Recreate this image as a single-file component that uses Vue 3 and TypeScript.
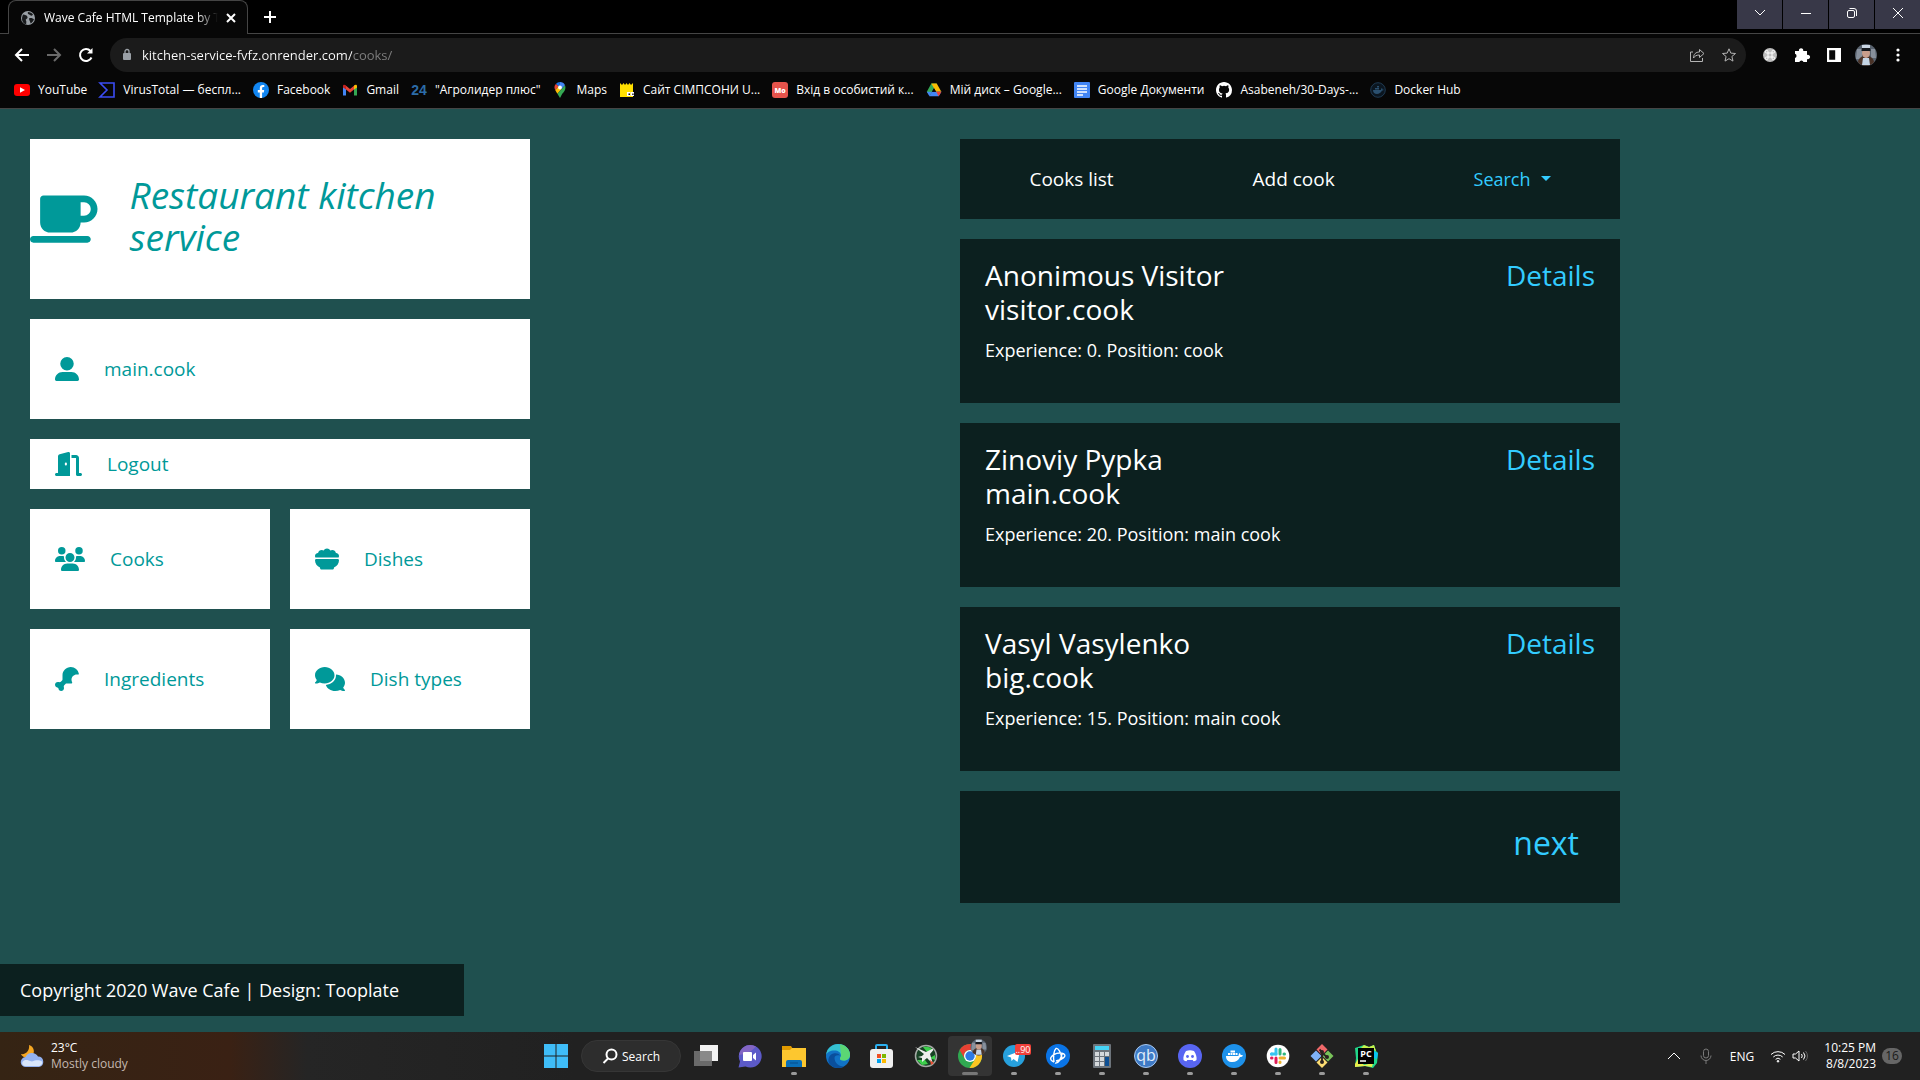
<script setup lang="ts">
interface Bookmark { label: string; icon: string }
interface MenuItem { label: string; width: number; path: string; wide?: boolean; short?: boolean }
interface Cook { name: string; username: string; experience: number; position: string }
interface TaskApp { name: string; icon: string; running?: boolean; active?: boolean }

const glyphs: Record<string, string> = {
  youtube: '<rect y="2" width="16" height="12" rx="3" fill="#f00"/><path d="M6 5.3v5.4L11 8z" fill="#fff"/>',
  virustotal: '<path d="M1 1h14v14H1l7-7z" fill="none" stroke="#3b4df5" stroke-width="1.6"/>',
  facebook: '<circle cx="8" cy="8" r="8" fill="#1186f2"/><path d="M6.8 16v-5.6H4.8V8h2V6.3c0-2.1 1.2-3.2 3-3.2.7 0 1.5.1 1.5.1v1.9h-1c-.9 0-1.2.6-1.2 1.2V8h2.1l-.4 2.4H9.1V16z" fill="#fff"/>',
  gmail: '<path d="M1 4v9.5h3V7z" fill="#4285f4"/><path d="M12 7v6.5h3V4z" fill="#34a853"/><path d="M4 3.8 8 7l4-3.2v3.8L8 10.8 4 7.6z" fill="#ea4335"/><path d="M1 4.2C1 2.5 2.8 2.4 4 3.5v4.1L1 5.4z" fill="#c5221f"/><path d="M15 4.2c0-1.700-1.800-1.800-3-.7v4.100l3-2.200z" fill="#fbbc04"/>',
  agro: '<text x="8" y="13" text-anchor="middle" font-family="Liberation Sans, sans-serif" font-weight="700" font-size="14" fill="#2c6ca8">24</text>',
  maps: '<path d="M8 0a5.5 5.5 0 0 0-4.2 2l3 2.6z" fill="#1a73e8"/><path d="M3.8 2A5.4 5.4 0 0 0 3.3 8.2l3.4-4z" fill="#ea4335"/><path d="M8 0a5.5 5.5 0 0 1 5 3.2L9.7 7 6.8 4.2z" fill="#4285f4"/><path d="m3.3 8.2 3.2-4 3 3-4.100 4.600z" fill="#fbbc04"/><path d="M13 3.200c1.500 4.100-1.200 6.600-3 9L8 16l-2.600-4.200z" fill="#34a853"/><circle cx="8" cy="5.500" r="1.900" fill="#fff"/>',
  bart: '<path d="M1 1l2 2 1.500-2L6 3l1.500-2L9 3l1.500-2L12 3l2-2v14H1z" fill="#ffe000"/><path d="M8 10h3.500v4H8zM12 10h3v4h-3z" fill="#fff"/><path d="M9.500 11.500H11V13H9.500zM13.300 11.500h1.300V13h-1.300z" fill="#000"/>',
  mo: '<rect width="16" height="16" rx="3" fill="#e5534b"/><text x="8" y="11" text-anchor="middle" font-family="Open Sans, sans-serif" font-weight="800" font-size="7" fill="#fff">Mo</text>',
  drive: '<path d="M5.300 1.500h5.400L8 6.200 4 13.700.8 9.800z" fill="#34a853"/><path d="M5.300 1.500h5.400l4.700 8.300H10z" fill="#fbbc04"/><path d="m3.400 14.300 2.500-4.500h9.500l-2.700 4.500z" fill="#4285f4"/><path d="M10.200 9.800h5.200l-2.700 4.500z" fill="#ea4335"/><path d="m.8 9.800 2.600 4.500 2.500-4.500z" fill="#4285f4"/><path d="M8 6.200 5.900 9.800h4.200z" fill="#070707"/>',
  docs: '<rect width="16" height="16" rx="1" fill="#4285f4"/><path d="M3 4h10M3 7h10M3 10h10M3 13h6" stroke="#fff" stroke-width="1.500"/>',
  github: '<path fill="#fff" d="M8 0C3.580 0 0 3.580 0 8c0 3.540 2.290 6.530 5.470 7.590.4.070.55-.17.55-.38 0-.19-.01-.82-.01-1.490-2.010.37-2.530-.49-2.690-.94-.09-.23-.48-.94-.82-1.130-.28-.15-.68-.52-.01-.53.63-.01 1.080.58 1.230.82.72 1.210 1.870.87 2.330.66.07-.52.28-.87.51-1.070-1.780-.2-3.640-.89-3.640-3.950 0-.87.31-1.590.82-2.150-.08-.2-.36-1.020.08-2.120 0 0 .67-.21 2.200.82a7.600 7.600 0 0 1 4 0c1.530-1.040 2.200-.82 2.200-.82.44 1.100.16 1.920.08 2.120.51.56.82 1.270.82 2.150 0 3.070-1.870 3.750-3.650 3.950.29.25.54.73.54 1.480 0 1.070-.01 1.930-.01 2.200 0 .21.15.46.55.38A8.010 8.010 0 0 0 16 8c0-4.420-3.580-8-8-8z"/>',
  hub: '<circle cx="8" cy="8" r="7.300" fill="#0b1620" stroke="#1f3a52"/><path d="M3 8h8c0-1 .4-1.600 1-2 .3.500.5.900.4 1.400.5 0 1 .1 1.300.3-.4.700-1 .9-1.700.9C11 11 9 12 7 12c-2.500 0-4-1.300-4-4z" fill="#2b506f"/><path d="M5 6h4v1.500H5zM7 4h2v1.500H7z" fill="#2b506f"/>',
}

const bookmarks: Bookmark[] = [
  { label: 'YouTube', icon: 'youtube' },
  { label: 'VirusTotal — беспл...', icon: 'virustotal' },
  { label: 'Facebook', icon: 'facebook' },
  { label: 'Gmail', icon: 'gmail' },
  { label: '"Агролидер плюс"', icon: 'agro' },
  { label: 'Maps', icon: 'maps' },
  { label: 'Сайт СІМПСОНИ U...', icon: 'bart' },
  { label: 'Вхід в особистий к...', icon: 'mo' },
  { label: 'Мій диск – Google...', icon: 'drive' },
  { label: 'Google Документи', icon: 'docs' },
  { label: 'Asabeneh/30-Days-...', icon: 'github' },
  { label: 'Docker Hub', icon: 'hub' },
]

const menu: MenuItem[] = [
  { label: 'main.cook', width: 512, wide: true, path: 'M256 288A144 144 0 1 0 256 0a144 144 0 1 0 0 288zm-94.700 32C72.200 320 0 392.200 0 481.300c0 17 13.800 30.700 30.700 30.700H481.300c17 0 30.700-13.800 30.700-30.700C512 392.200 439.800 320 350.700 320H161.300z' },
  { label: 'Logout', width: 576, wide: true, short: true, path: 'M320 32c0-9.900-4.500-19.200-12.300-25.200S289.800-1.400 280.200 1l-179.900 45C79 51.300 64 70.500 64 92.500V448H32c-17.700 0-32 14.300-32 32s14.300 32 32 32H96 288h32V480 32zM256 256c0 17.700-10.700 32-24 32s-24-14.300-24-32s10.700-32 24-32s24 14.300 24 32zm96-128h96V480c0 17.700 14.300 32 32 32h64c17.700 0 32-14.300 32-32s-14.300-32-32-32H512V128c0-35.300-28.700-64-64-64H352v64z' },
  { label: 'Cooks', width: 640, path: 'M144 0a80 80 0 1 1 0 160A80 80 0 1 1 144 0zM512 0a80 80 0 1 1 0 160A80 80 0 1 1 512 0zM0 298.700C0 239.800 47.800 192 106.700 192h42.700c15.900 0 31 3.500 44.600 9.700c-1.300 7.200-1.900 14.700-1.900 22.300c0 38.200 16.800 72.500 43.300 96c-.2 0-.4 0-.7 0H21.300C9.600 320 0 310.400 0 298.700zM405.300 320c-.2 0-.4 0-.7 0c26.600-23.500 43.300-57.800 43.300-96c0-7.600-.7-15-1.900-22.300c13.600-6.300 28.700-9.700 44.600-9.700h42.700C592.200 192 640 239.800 640 298.700c0 11.800-9.600 21.300-21.300 21.300H405.300zM224 224a96 96 0 1 1 192 0 96 96 0 1 1 -192 0zM128 485.300C128 411.700 187.700 352 261.300 352H378.700C452.300 352 512 411.700 512 485.300c0 14.700-11.900 26.700-26.700 26.700H154.700c-14.700 0-26.700-11.900-26.700-26.700z' },
  { label: 'Dishes', width: 512, path: 'M0 192c0-35.300 28.700-64 64-64c.5 0 1.100 0 1.600 0C73 91.500 105.300 64 144 64c15 0 29 4.100 40.900 11.200C198.200 49.600 225.100 32 256 32s57.800 17.600 71.100 43.200C339 68.100 353 64 368 64c38.700 0 71 27.500 78.400 64c.5 0 1.100 0 1.600 0c35.300 0 64 28.700 64 64c0 11.700-3.100 22.600-8.600 32H8.600C3.100 214.600 0 203.700 0 192zm0 91.400C0 268.300 12.300 256 27.400 256H484.600c15.100 0 27.400 12.300 27.400 27.400c0 70.500-44.400 130.700-106.700 154.100L403.500 452c-2 16-15.600 28-31.800 28H140.200c-16.100 0-29.800-12-31.800-28l-1.800-14.400C44.400 414.100 0 353.900 0 283.400z' },
  { label: 'Ingredients', width: 512, path: 'M160 265.200c0 8.500-3.400 16.600-9.400 22.600l-26.800 26.800c-12.300 12.300-32.500 11.400-49.400 7.200C69.800 320.600 65 320 60 320c-33.100 0-60 26.900-60 60s26.900 60 60 60c6.300 0 12 5.700 12 12c0 33.100 26.900 60 60 60s60-26.900 60-60c0-5-.6-9.800-1.800-14.500c-4.200-16.900-5.200-37.100 7.200-49.400l26.800-26.800c6-6 14.100-9.400 22.600-9.400H336c6.300 0 12.400-.3 18.500-1c11.900-1.200 16.400-15.500 10.800-26c-8.500-15.800-13.300-33.800-13.300-53c0-61.900 50.100-112 112-112c8 0 15.700 .8 23.200 2.400c11.700 2.500 24.100-5.900 22-17.600C494.500 62.500 422.500 0 336 0C238.800 0 160 78.800 160 176v89.200z' },
  { label: 'Dish types', width: 640, path: 'M208 352c114.900 0 208-78.800 208-176S322.900 0 208 0S0 78.800 0 176c0 38.600 14.700 74.300 39.600 103.400c-3.500 9.400-8.700 17.700-14.200 24.700c-4.800 6.200-9.700 11-13.300 14.300c-1.800 1.600-3.300 2.900-4.300 3.700c-.5 .4-.9 .7-1.100 .8l-.2 .2C1 327.200-1.400 334.400 .8 340.900S9.100 352 16 352c21.800 0 43.800-5.600 62.100-12.500c9.200-3.500 17.800-7.400 25.300-11.400C134.100 343.300 169.800 352 208 352zM448 176c0 112.300-99.100 196.900-216.500 207C255.800 457.400 336.400 512 432 512c38.200 0 73.900-8.700 104.700-23.900c7.500 4 16 7.900 25.200 11.400c18.300 6.900 40.300 12.500 62.100 12.500c6.900 0 13.100-4.500 15.200-11.100c2.100-6.600-.2-13.800-5.800-17.900l-.2-.2c-.2-.2-.6-.4-1.100-.8c-1-.8-2.500-2-4.300-3.700c-3.600-3.300-8.500-8.100-13.300-14.300c-5.500-7-10.700-15.400-14.200-24.700c24.900-29 39.600-64.700 39.600-103.400c0-92.800-84.900-168.900-192.600-175.500c.4 5.100 .6 10.300 .6 15.500z' },
]

const cooks: Cook[] = [
  { name: 'Anonimous Visitor', username: 'visitor.cook', experience: 0, position: 'cook' },
  { name: 'Zinoviy Pypka', username: 'main.cook', experience: 20, position: 'main cook' },
  { name: 'Vasyl Vasylenko', username: 'big.cook', experience: 15, position: 'main cook' },
]

const avatar = '<circle cx="11" cy="11" r="11" fill="#59636f"/><path d="M2 5h5v10H1zM16 5h4l1 9h-5z" fill="#87909c"/><path d="M3 18c1-5 4-6 8-6s7 1 8 6c-4 5-12 5-16 0z" fill="#4a3328"/><path d="M8 14h6l1 7H7z" fill="#c4d4e4"/><ellipse cx="11" cy="9" rx="4" ry="5" fill="#c99e8c"/><path d="M6.500 7C6.500 3 8 2 11 2s4.500 1 4.500 5z" fill="#15181d"/><path d="M7 1h8v3H7z" fill="#c9d5e2"/>'

const apps: TaskApp[] = [
  { name: 'Task view', icon: '<rect x="6" y="1" width="18" height="16" fill="#f2f2f2"/><rect y="7" width="18" height="15" fill="#777" fill-opacity=".85"/>' },
  { name: 'Chat', icon: '<path d="M12 1A11.300 11.300 0 1 1 7.500 22.500L.5 23.500 2 17.500A11.300 11.300 0 0 1 12 1z" fill="#5c5ac8"/><path d="M12 1A11.300 11.300 0 0 0 1 11c8-1 13-4 17-8.500A11 11 0 0 0 12 1z" fill="#8466c4"/><rect x="5" y="8" width="9" height="9" rx="1" fill="#fff"/><path d="m15 11 3-2.500v8L15 14z" fill="#fff"/>' },
  { name: 'File Explorer', running: true, icon: '<path d="M0 2h9l2 3h12v6H0z" fill="#e09a00"/><path d="M0 6h8l2-2h14v19H0z" fill="#fdc72f"/><path d="M4 23v-5q0-2 2-2h12q2 0 2 2v5z" fill="#0a6fb8"/><path d="M8 19h8" stroke="#064f8c"/>' },
  { name: 'Edge', icon: '<circle cx="12" cy="12" r="12" fill="#1173c6"/><path d="M0 11C1 4 6 0 12 0c7 0 12 5 12 10.500 0 4-3 6-6.500 6-2.500 0-3.500-1-3.500-2 0-1 1-1.500 1-3 0-3-3-5-6.500-5C4 6.500 1 8.500 0 11z" fill="#35c1d0"/><path d="M14 .2C20 1 24 6 24 10.500c0 4-3 6-6.500 6-2.500 0-3.500-1-3.500-2 0-1 1-1.500 1-3C15 8 14 4 14 .200z" fill="#5bd774"/><path d="M8.500 14c0 5 5 8.500 9 8.500-4 2.500-10 2-13.500-2S3 10.500 7.500 9.500c3-.6 5 0 6.500 2-3-.8-5.500 0-5.500 2.500z" fill="#0a4f9c"/>' },
  { name: 'Microsoft Store', icon: '<path d="M6 6V2q0-1 1-1h9q1 0 1 1v4" fill="none" stroke="#2bb0f0" stroke-width="2"/><rect y="5" width="23" height="19" rx="3" fill="#f0f0f0"/><path d="M7 10h4v4H7z" fill="#f04e23"/><path d="M12 10h4v4h-4z" fill="#7db800"/><path d="M7 15h4v4H7z" fill="#00a2ed"/><path d="M12 15h4v4h-4z" fill="#fdb900"/>' },
  { name: 'Flight app', icon: '<circle cx="12" cy="12" r="10.500" fill="#184225" stroke="#a4aaa5" stroke-width="1.500"/><path d="M9 3c4-1 8 0 10 3l-6 2zM3 16l5 5 6-1-3-4zM16 14l5-3v5z" fill="#3ccf4b"/><path d="m1 3 11 5 6-3c1 0 1.500.6 1 1.500L16 10l3 10-6-6-5 4v-4l-4-1 4-1 2-2z" fill="#eee"/><path d="m16 16 4 3-3 2z" fill="#e34b32"/>' },
  { name: 'Chrome', running: true, active: true, icon: '<circle cx="12" cy="12" r="12" fill="#30a851"/><path d="M1.600 6A12 12 0 0 1 22.400 6H12a6 6 0 0 0-5.200 9z" fill="#e84033"/><path d="M22.400 6A12 12 0 0 1 11.500 24l5.700-9A6 6 0 0 0 12 6z" fill="#fcc521"/><circle cx="12" cy="12" r="6" fill="#fff"/><circle cx="12" cy="12" r="4.700" fill="#2c7be5"/><g transform="translate(12.500 -5) scale(.75)">' + avatar + '</g>' },
  { name: 'Telegram', running: true, icon: '<circle cx="12" cy="12" r="11" fill="#27a0dc"/><path d="m5 12 13-5-2.500 11-4-3-2 2-.5-3.500z" fill="#fff"/><rect x="13" y="0" width="16" height="11" rx="2" fill="#f0403a"/><text x="21" y="9" text-anchor="middle" font-family="Open Sans, sans-serif" font-size="9" fill="#fff">..90</text>' },
  { name: 'Battle.net', running: true, icon: '<circle cx="12" cy="12" r="12" fill="#0a74e6"/><path d="M8 18C7 12 8 6 10 4.500c2-1 5 4 6 9.500M5 13.500C7 9 14 8 18 10c3 2-2 6-8 7M9 19c3 1 6-4 7-9M8 18c-3-1-4-3-3-4.500" fill="none" stroke="#fff" stroke-width="1.400"/>' },
  { name: 'Calculator', running: true, icon: '<rect x="3" width="18" height="24" rx="1" fill="#6d747b"/><rect x="5" y="2" width="14" height="4" fill="#45d3f5"/><path d="M5 8h4v4H5zM10 8h4v4h-4zM15 8h4v4h-4zM5 13h4v4H5zM10 13h4v4h-4zM5 18h4v4H5zM10 18h4v4h-4z" fill="#d5d9dc"/><path d="M15 13h4v9h-4z" fill="#0d4f93"/>' },
  { name: 'qBittorrent', running: true, icon: '<circle cx="12" cy="12" r="11.500" fill="#3f7ac5" stroke="#a8c8ee"/><text x="12" y="17" text-anchor="middle" font-family="Open Sans, sans-serif" font-size="16" fill="#e3effb">qb</text>' },
  { name: 'Discord', running: true, icon: '<circle cx="12" cy="12" r="12" fill="#5865f2"/><path d="M8 7c3-1 5-1 8 0 2 3 3 6 2.500 9-1 .8-2 1.200-3 1.300l-.8-1.300h-5.400l-.8 1.300c-1-.1-2-.5-3-1.300C5 13 6 10 8 7z" fill="#fff"/><circle cx="9.500" cy="12.500" r="1.400" fill="#5865f2"/><circle cx="14.500" cy="12.500" r="1.400" fill="#5865f2"/>' },
  { name: 'Docker', running: true, icon: '<circle cx="12" cy="12" r="12" fill="#1d91ea"/><path d="M4 12h12.500c0-1.500.5-2.300 1.200-3 .7.700 1 1.300.9 2 1 0 1.700 0 2.400.5-.6 1-1.600 1.500-3 1.500-1.500 3.500-4 5-7.500 5-4 0-6.500-1.700-6.500-6z" fill="#fff"/><path d="M6 9h2v2H6zM8.500 9h2v2h-2zM11 9h2v2h-2zM13.500 9h2v2h-2zM8.500 6.500h4.500v2H8.500z" fill="#fff"/>' },
  { name: 'Slack', running: true, icon: '<circle cx="12" cy="12" r="11.300" fill="#fff"/><g fill="none" stroke-width="3" stroke-linecap="round"><path d="M10 5v5M5.500 10H6" stroke="#36c5f0"/><path d="M10 10H5.500" stroke="#36c5f0"/><path d="M14 5.500V10M18.500 10h-.5" stroke="#2eb67d"/><path d="M14 14h4.500M14 18.500V18" stroke="#ecb22e"/><path d="M10 14v4.500M5.500 14H6" stroke="#e01e5a"/></g>' },
  { name: 'Git', running: true, icon: '<path d="m12 0 5.500 5.500L12 11 6.500 5.500z" fill="#f0696a"/><path d="M6 6.500 11.500 12 6 17.500.5 12z" fill="#7fb2f8"/><path d="m18 6.500 5.500 5.500-5.500 5.500-5.500-5.500z" fill="#79c35a"/><path d="m12 13 5.500 5.500L12 24l-5.500-5.500z" fill="#fbdc73"/><path d="M9.500 5.500 12 8v11M12 9l5 4" fill="none" stroke="#2a2220" stroke-width="1.800"/><circle cx="12" cy="8" r="2" fill="#2a2220"/><circle cx="12" cy="18" r="2" fill="#2a2220"/><circle cx="17" cy="13" r="2" fill="#2a2220"/>' },
  { name: 'PyCharm', running: true, icon: '<path d="m1 4 9-3 5 2 5-2 2 6 2 2-1 10-4 5-8-2-10 1 1-9z" fill="#21d789"/><path d="m10 1 5 2 5-2 2 6-4-2H6z" fill="#c8f04a"/><path d="m20 7 4 2-1 6-3-1z" fill="#07c3f2"/><path d="m1 20 3-5 6 6 9-2-1 4-7-1-10 1z" fill="#e8ee4b"/><rect x="4" y="4" width="16" height="16" fill="#000"/><text x="12" y="13" text-anchor="middle" font-family="Open Sans, sans-serif" font-weight="700" font-size="9" fill="#fff">PC</text><path d="M6 17h6" stroke="#fff" stroke-width="1.500"/>' },
]
</script>

<template>
  <div class="screen">
    <header class="browser">
      <div class="tabs">
        <div class="tab">
          <svg class="globe" viewBox="0 0 16 16"><circle cx="8" cy="8" r="7" fill="#9aa0a6" /><path d="M3 4.500C5 5 7 5 7.500 7S5 9 6 10.500 5.500 14 6.500 14.500C2 13.500 1 9 3 4.500zM8 2c-1 2 1 2 2 3s2 1 3-.5C12 3 10 2 8 2zM9 8.500c2-1 3 0 5 .5-.5 2-2 3.500-3.500 4.500 0-2-1.500-3-1.500-5z" fill="#181a1c" /></svg>
          <span class="tab-title">Wave Cafe HTML Template by To</span>
          <button class="bare tab-close" aria-label="Close tab"><svg viewBox="0 0 10 10"><path d="m1 1 8 8M9 1 1 9" /></svg></button>
        </div>
        <button class="bare new-tab" aria-label="New tab"><svg viewBox="0 0 12 12"><path d="M6 0v12M0 6h12" /></svg></button>
        <div class="window-buttons">
          <button aria-label="Search tabs"><svg viewBox="0 0 12 12"><path d="m1 3 5 5 5-5" /></svg></button>
          <button aria-label="Minimize"><svg viewBox="0 0 12 12"><path d="M1 6.500h10" /></svg></button>
          <button aria-label="Restore"><svg viewBox="0 0 12 12"><rect x="1.500" y="3.500" width="7" height="7" rx="1.500" /><path d="M3.500 1.500H8q2.500 0 2.500 2.500v5" /></svg></button>
          <button aria-label="Close"><svg viewBox="0 0 12 12"><path d="m1 1 10 10M11 1 1 11" /></svg></button>
        </div>
      </div>

      <div class="toolbar">
        <button class="bare" aria-label="Back"><svg class="nav-icon" viewBox="0 0 16 16"><path d="M15 8H2M8 2 2 8l6 6" /></svg></button>
        <button class="bare dim" aria-label="Forward"><svg class="nav-icon" viewBox="0 0 16 16"><path d="M1 8h13M8 2l6 6-6 6" /></svg></button>
        <button class="bare" aria-label="Reload"><svg class="nav-icon" viewBox="0 0 16 16"><path d="M13.500 10.500A6 6 0 1 1 12.500 4" /><path d="M14.500 1v5.500H9z" fill="#fff" stroke="none" /></svg></button>
        <div class="omnibox">
          <svg class="lock" viewBox="0 0 10 14"><rect x="1" y="5" width="8" height="7" rx="1" fill="#9aa0a6" /><path d="M3 5V3.500a2 2 0 0 1 4 0V5" fill="none" stroke="#9aa0a6" stroke-width="1.300" /></svg>
          <input class="url" type="text" value="kitchen-service-fvfz.onrender.com/cooks/" aria-label="Address" />
          <button class="bare" aria-label="Share"><svg class="box-icon" viewBox="0 0 16 16"><path d="M4 5H1.500v9.500h12V11" /><path d="M4.500 11c0-4 2.500-6 6-6V2.500l4.500 4-4.500 4V8c-3 0-4.800 1-6 3z" /></svg></button>
          <button class="bare" aria-label="Bookmark"><svg class="box-icon" viewBox="0 0 16 16"><path d="m8 1.800 1.800 4.300 4.700.4-3.600 3 1.100 4.600L8 11.700l-4 2.400 1.100-4.600-3.600-3 4.700-.4z" /></svg></button>
        </div>
        <button class="bare" aria-label="Command extension"><svg class="ext-icon" viewBox="0 0 16 16"><circle cx="8" cy="8" r="7" fill="#bdbdbd" /><path d="M6 6h4v4H6zM6 6H4.700A1.300 1.300 0 1 1 6 4.700zM10 6V4.700A1.300 1.300 0 1 1 11.300 6zM10 10h1.300a1.300 1.300 0 1 1-1.300 1.300zM6 10v1.300A1.300 1.300 0 1 1 4.700 10z" fill="none" stroke="#fff" /></svg></button>
        <button class="bare" aria-label="Extensions"><svg class="ext-icon" viewBox="0 0 16 16"><path d="M1 4h4a2.200 2.200 0 1 1 4.200 0H13v4a2.200 2.200 0 1 1 0 4v3H9.500a2.200 2.200 0 0 0-4.200 0H1v-4a2.200 2.200 0 0 0 0-4.200z" fill="#fff" /></svg></button>
        <button class="bare" aria-label="Side panel"><svg class="ext-icon" viewBox="0 0 16 16"><path d="M1 1h14v14H1zM3.200 3.200v9.600h6V3.200z" fill="#fff" fill-rule="evenodd" /></svg></button>
        <button class="bare profile" aria-label="Profile"><svg class="avatar" viewBox="0 0 22 22" v-html="avatar"></svg></button>
        <button class="bare" aria-label="Menu"><svg class="ext-icon" viewBox="0 0 16 16"><g fill="#fff"><circle cx="8" cy="3" r="1.600" /><circle cx="8" cy="8" r="1.600" /><circle cx="8" cy="13" r="1.600" /></g></svg></button>
      </div>

      <nav class="bookmarks" aria-label="Bookmarks">
        <a v-for="b in bookmarks" :key="b.label" href="#"><svg viewBox="0 0 16 16" v-html="glyphs[b.icon]"></svg>{{ b.label }}</a>
      </nav>
    </header>

    <div class="page">
      <div class="columns">
        <aside class="sidebar">
          <div class="brand">
            <svg viewBox="0 0 640 512"><path d="M96 64c0-17.700 14.300-32 32-32H448h64c70.700 0 128 57.300 128 128s-57.300 128-128 128H480c0 53-43 96-96 96H192c-53 0-96-43-96-96V64zM480 224h32c35.300 0 64-28.700 64-64s-28.700-64-64-64H480V224zM32 416H544c17.700 0 32 14.300 32 32s-14.300 32-32 32H32c-17.700 0-32-14.300-32-32s14.300-32 32-32z" /></svg>
            <h1>Restaurant kitchen service</h1>
          </div>
          <nav class="menu">
            <a v-for="item in menu" :key="item.label" href="#" :class="{ wide: item.wide, short: item.short }">
              <svg :viewBox="`0 0 ${item.width} 512`"><path :d="item.path" /></svg>
              <span>{{ item.label }}</span>
            </a>
          </nav>
        </aside>

        <main class="content">
          <nav class="cook-nav">
            <a href="#">Cooks list</a>
            <a href="#">Add cook</a>
            <button class="search-toggle">Search</button>
          </nav>
          <article v-for="cook in cooks" :key="cook.username" class="cook">
            <div>
              <h2>{{ cook.name }}<br />{{ cook.username }}</h2>
              <p>Experience: {{ cook.experience }}. Position: {{ cook.position }}</p>
            </div>
            <a href="#">Details</a>
          </article>
          <nav class="pager"><a href="#">next</a></nav>
        </main>
      </div>
      <footer class="copyright">Copyright 2020 Wave Cafe | Design: Tooplate</footer>
    </div>

    <div class="taskbar">
      <button class="bare weather">
        <svg viewBox="0 0 24 24"><path d="M9 1c5 1 7 8 2 12-4 2-9 0-10-3 5 1 9-4 8-9z" fill="#f6a723" /><path d="M6 23a5 5 0 0 1-.5-10A7 7 0 0 1 18 12.500 5.300 5.300 0 0 1 19 23z" fill="#94b2f0" /><path d="M5 22c-3 0-4-4-1-5.500 3-1 4 0 8 1 4-2 8-1.500 10 0 1 2-1 4.500-3 4.500z" fill="#d9e6fb" /></svg>
        <span class="two-lines"><span>23°C</span><span class="muted">Mostly cloudy</span></span>
      </button>
      <div class="apps">
        <button class="bare app" aria-label="Start"><svg viewBox="0 0 24 24"><path d="M0 0h11.500v11.500H0zM12.500 0H24v11.500H12.500zM0 12.500h11.500V24H0zM12.500 12.500H24V24H12.500z" fill="#3fbdf8" /></svg></button>
        <button class="search-pill"><svg viewBox="0 0 16 16"><circle cx="9.500" cy="6.500" r="5" /><path d="M6 10.500 1.500 15" /></svg>Search</button>
        <button v-for="app in apps" :key="app.name" class="bare app" :class="{ running: app.running, active: app.active }" :aria-label="app.name"><svg viewBox="0 0 24 24" v-html="app.icon"></svg></button>
      </div>
      <div class="tray">
        <button class="bare" aria-label="Hidden icons"><svg viewBox="0 0 16 16"><path d="m2 11 6-6 6 6" /></svg></button>
        <button class="bare mic" aria-label="Microphone"><svg viewBox="0 0 16 16"><rect x="5.500" y="1" width="5" height="9" rx="2.500" /><path d="M3 7.500a5 5 0 0 0 10 0M8 12.500V16" /></svg></button>
        <button class="bare lang">ENG</button>
        <button class="bare status" aria-label="Network and sound">
          <svg viewBox="0 0 16 16"><path d="M1 6.500a10 10 0 0 1 14 0M3.300 9a6.700 6.700 0 0 1 9.400 0M5.600 11.300a3.400 3.400 0 0 1 4.800 0" /><circle cx="8" cy="13.300" r=".8" fill="#fff" /></svg>
          <svg viewBox="0 0 16 16"><path d="M1 6h2.500L7 3v10L3.500 10H1zM9.500 6q1.500 2 0 4M11.500 4.500q3 3.500 0 7" /><path d="M13.500 3q4 5 0 10" stroke="#666" /></svg>
        </button>
        <button class="bare two-lines clock"><span>10:25 PM</span><span>8/8/2023</span></button>
        <span class="badge">16</span>
      </div>
    </div>
  </div>
</template>

<style>
body {
  margin: 0;
  background: #1f504f;
}
</style>

<style scoped>
* {
  box-sizing: border-box;
}

.screen {
  display: flex;
  flex-direction: column;
  min-height: 100vh;
  font-family: "Open Sans", "Noto Sans", sans-serif;
  color: #fff;
}

svg {
  flex: none;
  overflow: visible;
}

a {
  color: inherit;
  text-decoration: none;
}

button {
  font: inherit;
  color: inherit;
}

.bare {
  display: flex;
  align-items: center;
  justify-content: center;
  padding: 0;
  border: 0;
  background: none;
}

/* browser chrome */
.browser {
  background: #070707;
  border-bottom: 1px solid #454545;
  font-size: 12px;
}

.tabs {
  display: flex;
  height: 34px;
  background: #000;
  border-bottom: 1px solid #454545;
}

.tab {
  display: flex;
  align-items: center;
  gap: 8px;
  width: 240px;
  height: 34px;
  margin-left: 8px;
  padding: 0 11px;
  background: #070707;
  border: 1px solid #454545;
  border-bottom: 0;
  border-radius: 8px 8px 0 0;
}

.globe {
  width: 16px;
  height: 16px;
}

.tab-title {
  flex: 1;
  min-width: 0;
  white-space: nowrap;
  mask-image: linear-gradient(90deg, #000 88%, transparent);
}

.tab-close svg {
  width: 10px;
  height: 10px;
}

.new-tab {
  width: 44px;
}

.new-tab svg {
  width: 12px;
  height: 12px;
}

.tab-close svg,
.new-tab svg {
  stroke: #fff;
  stroke-width: 2;
}

.window-buttons {
  display: flex;
  gap: 1px;
  margin-left: auto;
}

.window-buttons button {
  width: 45px;
  height: 29px;
  padding: 0;
  border: 0;
  background: #383848;
}

.window-buttons svg {
  width: 12px;
  height: 12px;
  fill: none;
  stroke: #fff;
}

.toolbar {
  display: flex;
  align-items: center;
  gap: 16px;
  height: 42px;
  padding: 0 14px;
}

.nav-icon {
  width: 16px;
  height: 16px;
  fill: none;
  stroke: #fff;
  stroke-width: 2;
}

.dim {
  opacity: 0.4;
}

.omnibox {
  display: flex;
  flex: 1;
  align-items: center;
  gap: 16px;
  height: 34px;
  padding: 0 9px 0 12px;
  border-radius: 17px;
  background: #1b1b1b;
}

.lock {
  width: 10px;
  height: 14px;
  margin-right: -6px;
}

.url {
  flex: 1;
  min-width: 0;
  padding: 0;
  border: 0;
  outline: 0;
  font: inherit;
  font-size: 13px;
  color: transparent;
  background: linear-gradient(90deg, #fff 210px, #808080 210px);
  background-clip: text;
}

.box-icon {
  width: 16px;
  height: 16px;
  fill: none;
  stroke: #b4b4b4;
}

.ext-icon {
  width: 16px;
  height: 16px;
}

.profile {
  margin: 0 -3px;
}

.avatar {
  width: 22px;
  height: 22px;
}

.bookmarks {
  display: flex;
  align-items: center;
  gap: 12px;
  height: 32px;
  padding: 0 14px 5px;
  white-space: nowrap;
}

.bookmarks a {
  display: flex;
  align-items: center;
  gap: 8px;
}

.bookmarks svg {
  width: 16px;
  height: 16px;
}

/* web page */
.page {
  display: flex;
  flex: 1;
  flex-direction: column;
  justify-content: space-between;
  padding: 30px 0 16px;
  background: #1f504f;
  font-size: 18px;
}

.columns {
  display: grid;
  grid-template-columns: 1fr 1fr;
}

.sidebar {
  max-width: 530px;
  padding-left: 30px;
  color: #099;
}

.sidebar svg {
  fill: #099;
}

.brand {
  display: flex;
  align-items: center;
  gap: 32px;
  height: 160px;
  background: #fff;
}

.brand svg {
  height: 54px;
}

.brand h1 {
  margin: 0;
  padding-bottom: 6px;
  font-size: 37px;
  font-style: italic;
  font-weight: 400;
  line-height: 42px;
}

.menu {
  display: grid;
  grid-template-columns: 1fr 1fr;
  gap: 20px;
  margin-top: 20px;
  font-size: 19px;
}

.menu a {
  display: flex;
  align-items: center;
  gap: 25px;
  height: 100px;
  padding: 0 25px;
  background: #fff;
}

.menu a.wide {
  grid-column: span 2;
}

.menu a.short {
  height: 50px;
}

.menu svg {
  height: 24px;
}

.content {
  display: flex;
  flex-direction: column;
  gap: 20px;
  max-width: 660px;
}

.cook-nav,
.cook,
.pager {
  background: #0c201f;
}

.cook-nav {
  display: flex;
  align-items: center;
  justify-content: space-around;
  height: 80px;
  font-size: 19px;
}

.search-toggle {
  padding: 0;
  border: 0;
  background: none;
  color: #33ccff;
  font-size: 18px;
}

.search-toggle::after {
  content: "";
  display: inline-block;
  margin-left: 10px;
  vertical-align: 5px;
  border: 5px solid transparent;
  border-top-color: currentColor;
  border-bottom: 0;
}

.cook {
  display: flex;
  justify-content: space-between;
  height: 164px;
  padding: 19px 25px;
  font-size: 28px;
  line-height: 34px;
}

.cook h2 {
  margin: 0 0 11px;
  font-size: 28px;
  font-weight: 400;
  line-height: 34px;
}

.cook p {
  margin: 0;
  font-size: 18px;
  line-height: 27px;
}

.cook a,
.pager a {
  color: #33ccff;
}

.pager {
  display: flex;
  align-items: center;
  justify-content: flex-end;
  height: 112px;
  padding: 0 41px 10px;
  font-size: 32px;
}

.copyright {
  width: 464px;
  padding: 12px 20px;
  background: #0c201f;
  line-height: 28px;
}

/* desktop taskbar */
.taskbar {
  display: grid;
  grid-template-columns: 1fr auto 1fr;
  align-items: center;
  height: 48px;
  background: linear-gradient(90deg, #352414 0, #3a2114 12%, #252525 16%, #212121 30%);
  font-size: 12px;
}

.weather {
  justify-self: start;
  gap: 7px;
  margin-left: 20px;
}

.weather svg {
  width: 24px;
  height: 24px;
}

.two-lines {
  display: flex;
  flex-direction: column;
  align-items: flex-start;
  line-height: 16px;
}

.muted {
  color: #c4b8b0;
}

.apps {
  display: flex;
  align-items: center;
  padding-left: 2px;
}

.app {
  position: relative;
  width: 44px;
  height: 40px;
}

.app svg {
  width: 24px;
  height: 24px;
}

.app.active {
  border-radius: 4px;
  background: #343434;
}

.running::after {
  content: "";
  position: absolute;
  bottom: 1px;
  left: 19px;
  width: 6px;
  height: 3px;
  border-radius: 2px;
  background: #9a9a9a;
}

.active::after {
  left: 14px;
  width: 16px;
  background: #777;
}

.search-pill {
  display: flex;
  align-items: center;
  justify-content: center;
  gap: 4px;
  width: 100px;
  height: 32px;
  margin: 0 3px;
  padding: 0;
  border: 1px solid #363636;
  border-radius: 16px;
  background: #2d2d2d;
}

.search-pill svg {
  width: 16px;
  height: 16px;
  fill: none;
  stroke: #fff;
  stroke-width: 2;
}

.tray {
  display: flex;
  align-items: center;
  justify-content: flex-end;
  gap: 16px;
  padding-right: 18px;
}

.tray svg {
  width: 16px;
  height: 16px;
  fill: none;
  stroke: #fff;
}

.mic {
  opacity: 0.4;
}

.status {
  gap: 6px;
}

.clock {
  align-items: flex-end;
}

.badge {
  width: 20px;
  margin-left: -10px;
  border-radius: 8px;
  background: #666;
  color: #1a1a1a;
  line-height: 16px;
  text-align: center;
}
</style>
